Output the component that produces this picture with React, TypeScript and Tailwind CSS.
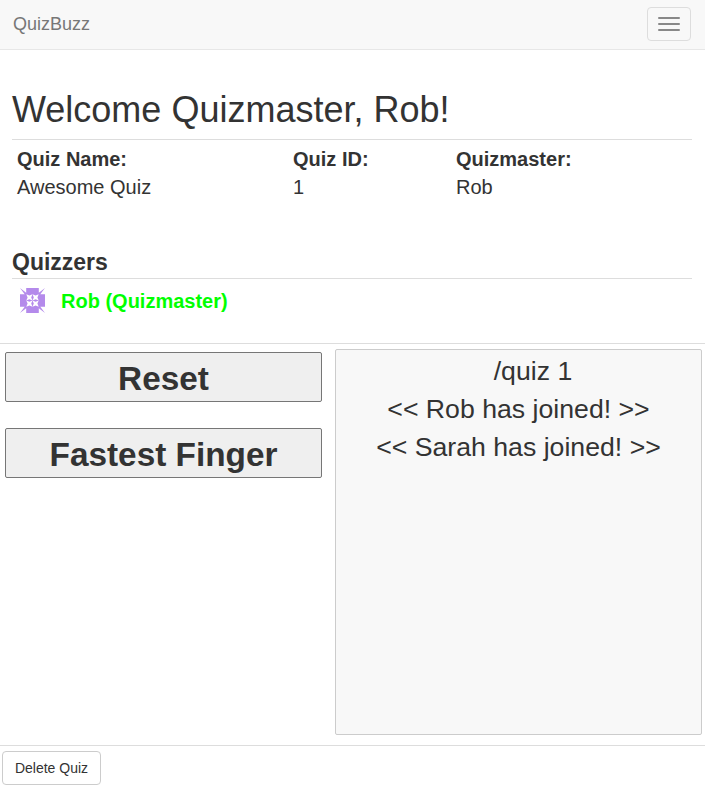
import React from 'react';

function Label({ title, value, className }: { title: string; value: string; className: string }) {
  return (
    <div className={className}>
      <div className="font-bold">{title}</div>
      <div>{value}</div>
    </div>
  );
}

function Avatar() {
  return (
    <svg width="25" height="25" viewBox="0 0 25 25" className="mt-px mr-px shrink-0 self-start">
      <path fill="#b48aeb" d="M0 0L6.2 4.7V0H18.8V4.7L25 0L20.3 6.2H25V18.8H20.3L25 25L18.8 20.3V25H6.2V20.3L0 25L4.7 18.8H0V6.2H4.7Z" />
      <g fill="#fff">
        <path d="M6.3 6.3L9.4 7.6L12.5 6.3L11.2 9.4L12.5 12.5L9.4 11.2L6.3 12.5L7.6 9.4Z" />
        <path d="M12.5 6.3L15.6 7.6L18.7 6.3L17.4 9.4L18.7 12.5L15.6 11.2L12.5 12.5L13.8 9.4Z" />
        <path d="M6.3 12.5L9.4 13.8L12.5 12.5L11.2 15.6L12.5 18.7L9.4 17.4L6.3 18.7L7.6 15.6Z" />
        <path d="M12.5 12.5L15.6 13.8L18.7 12.5L17.4 15.6L18.7 18.7L15.6 17.4L12.5 18.7L13.8 15.6Z" />
      </g>
    </svg>
  );
}

export default function App() {
  return (
    <div className="flex h-[791px] w-[705px] flex-col overflow-hidden bg-white font-['Liberation_Sans',Arial,sans-serif] text-[#333]">
      <nav className="flex h-[50px] shrink-0 items-start justify-between border-b border-[#e7e7e7] bg-[#f8f8f8] pr-[14px] pl-[13px]">
        <span className="mt-[14px] text-[18px] leading-5 text-[#777]">QuizBuzz</span>
        <button className="mt-[7px] flex h-[34px] w-[44px] flex-col items-center justify-center gap-1 rounded border border-[#ddd]">
          <span className="h-0.5 w-[22px] rounded-[1px] bg-[#888]" />
          <span className="h-0.5 w-[22px] rounded-[1px] bg-[#888]" />
          <span className="h-0.5 w-[22px] rounded-[1px] bg-[#888]" />
        </button>
      </nav>
      <main className="h-[293px] shrink-0 px-[12px] pt-[40px]">
        <h1 className="h-[49px] text-[36px] leading-[40px]">Welcome Quizmaster, Rob!</h1>
        <div className="flex h-[107px] w-[680px] border-t border-[#ddd] pt-[5px] pl-[5px] text-[20px] leading-[28px]">
          <Label title="Quiz Name:" value="Awesome Quiz" className="w-[276px]" />
          <Label title="Quiz ID:" value="1" className="w-[163px]" />
          <Label title="Quizmaster:" value="Rob" className="w-[200px]" />
        </div>
        <h2 className="h-[32px] pt-[3px] text-[23px] leading-[26px] font-bold">Quizzers</h2>
        <div className="flex w-[680px] items-center border-t border-[#ddd] pt-[8px] pl-[8px]">
          <Avatar />
          <span className="ml-[15px] text-[20px] leading-[28px] font-bold text-[#0f0]">Rob (Quizmaster)</span>
        </div>
      </main>
      <section className="flex h-[402px] shrink-0 border-t border-[#ddd] pt-[5px] pr-[3px] pl-[5px]">
        <div className="flex w-[317px] flex-col gap-[26px] pt-[3px]">
          <button className="h-[50px] rounded-[2px] border border-[#767676] bg-[#efefef] pt-[2px] text-[33.33px] leading-[48px] font-bold">Reset</button>
          <button className="h-[50px] rounded-[2px] border border-[#767676] bg-[#efefef] pt-[2px] text-[33.33px] leading-[48px] font-bold">Fastest Finger</button>
        </div>
        <div className="ml-[13px] h-[386px] w-[367px] rounded-[2px] border border-[#ccc] bg-[#f8f8f8] pt-[2px] text-center text-[26.67px] leading-[38px]">
          <div className="pl-[29px]">/quiz 1</div>
          <div>&lt;&lt; Rob has joined! &gt;&gt;</div>
          <div>&lt;&lt; Sarah has joined! &gt;&gt;</div>
        </div>
      </section>
      <footer className="grow border-t border-[#ddd] pt-[5px] pl-[2px]">
        <button className="h-[34px] w-[99px] rounded border border-[#ccc] bg-white text-[14px] leading-5">Delete Quiz</button>
      </footer>
    </div>
  );
}
